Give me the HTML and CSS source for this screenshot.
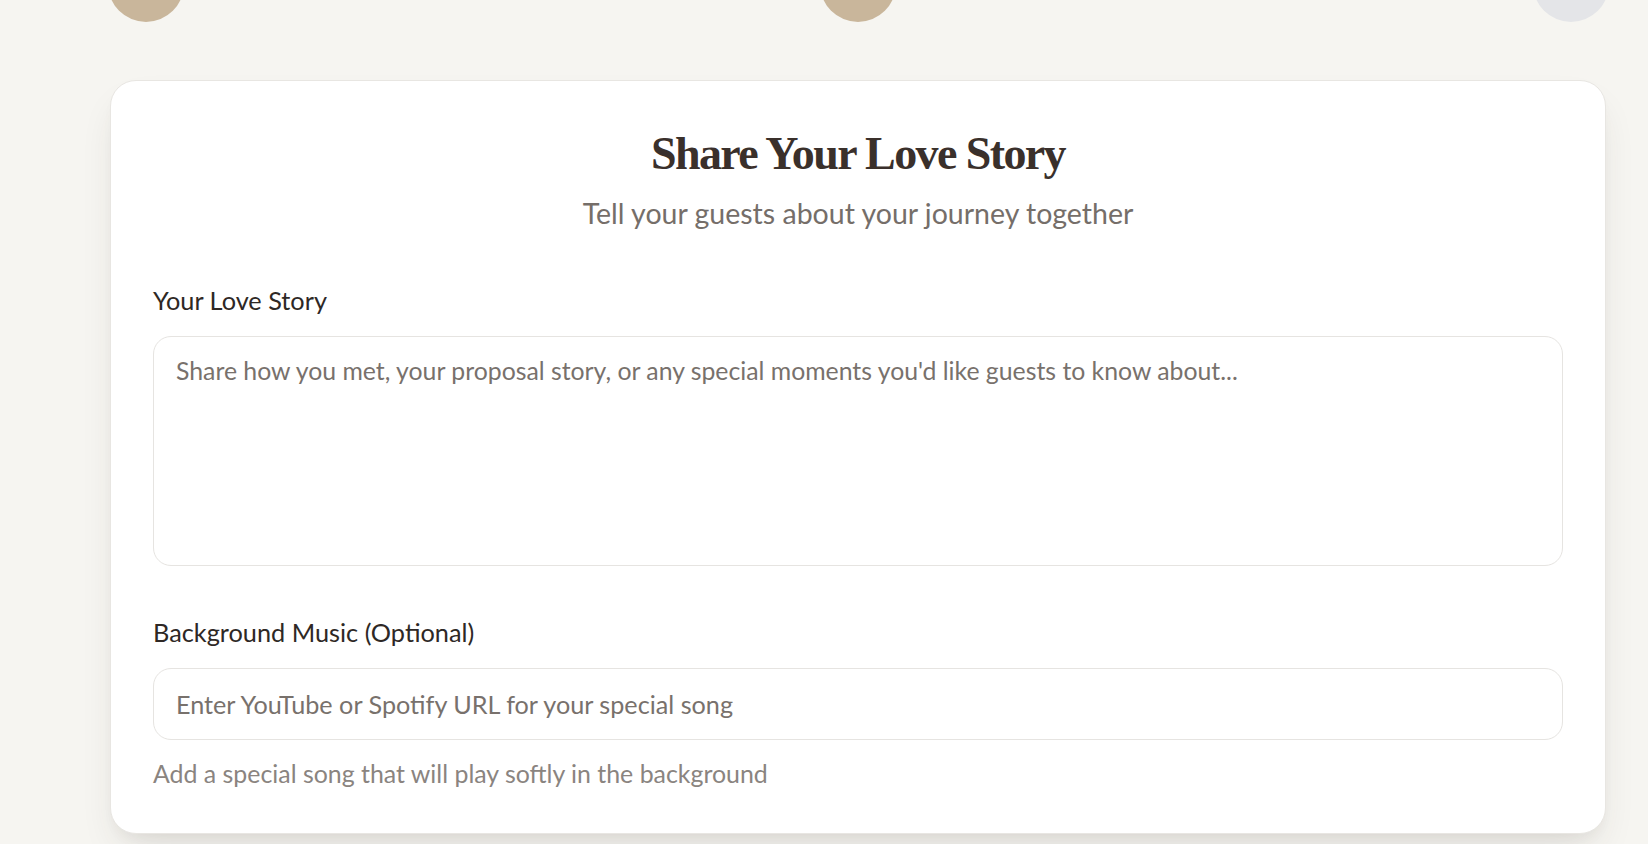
FILE: index.html
```html
<!DOCTYPE html>
<html lang="en">
<head>
<meta charset="utf-8">
<title>Share Your Love Story</title>
<link rel="stylesheet" href="styles.css">
</head>
<body>
<div class="page">
  <div class="steps">
    <span class="step step-done"></span>
    <span class="step step-done"></span>
    <span class="step"></span>
  </div>
  <section class="card">
    <header class="card-head">
      <h1 class="card-title">Share Your Love Story</h1>
      <p class="card-sub">Tell your guests about your journey together</p>
    </header>
    <div class="field">
      <label class="field-label" for="story">Your Love Story</label>
      <textarea id="story" class="field-textarea" placeholder="Share how you met, your proposal story, or any special moments you'd like guests to know about..."></textarea>
    </div>
    <div class="field field-music">
      <label class="field-label" for="music">Background Music (Optional)</label>
      <input id="music" class="field-input" type="text" placeholder="Enter YouTube or Spotify URL for your special song">
      <p class="field-hint">Add a special song that will play softly in the background</p>
    </div>
  </section>
</div>
</body>
</html>
```

FILE: styles.css
```css
* { box-sizing: border-box; }
html, body { height: 100%; }
body {
  margin: 0;
  background: #f6f5f1;
  font-family: Lato, "Open Sans", sans-serif;
  color: #2e2825;
  overflow: hidden;
}
.page {
  width: 1496px;
  margin-left: 110px;
}
.steps {
  display: flex;
  justify-content: space-between;
  margin: -54px -2.5px 0;
}
.step {
  width: 76px;
  height: 76px;
  border-radius: 50%;
  background: #e4e5e8;
}
.step-done { background: #c9b69b; }

.card {
  margin-top: 58px;
  background: #ffffff;
  border: 1px solid #e8e6e2;
  border-radius: 26px;
  padding: 48px 42px 44px;
  box-shadow: 0 20px 40px -12px rgba(60, 50, 40, 0.14), 0 8px 16px -8px rgba(60, 50, 40, 0.08);
}
.card-head {
  text-align: center;
  margin-bottom: 49px;
}
.card-title {
  margin: 0;
  font-family: "Liberation Serif", "Times New Roman", serif;
  font-weight: 700;
  font-size: 46px;
  line-height: 50px;
  letter-spacing: -1.6px;
  color: #3a302b;
}
.card-sub {
  margin: 14px 0 0;
  font-size: 28.5px;
  line-height: 40px;
  color: #756e69;
}
.field + .field { margin-top: 48px; }
.field-label {
  display: block;
  font-size: 25.3px;
  line-height: 36px;
  color: #2e2825;
  margin-bottom: 18px;
}
.field-textarea,
.field-input {
  display: block;
  width: 100%;
  font-family: Lato, "Open Sans", sans-serif;
  font-size: 25.2px;
  line-height: 36px;
  color: #2e2825;
  background: #fff;
  border: 1px solid #e6e4e1;
  border-radius: 18px;
  outline: none;
}
.field-textarea {
  height: 230px;
  padding: 16px 22px;
  font-size: 24.8px;
  resize: none;
}
.field-input {
  height: 72px;
  padding: 0 22px;
}
.field-textarea::placeholder,
.field-input::placeholder {
  color: #78716c;
  opacity: 1;
}
.field-hint {
  margin: 18px 0 0;
  font-size: 24.9px;
  line-height: 31px;
  color: #8a8480;
}
```
